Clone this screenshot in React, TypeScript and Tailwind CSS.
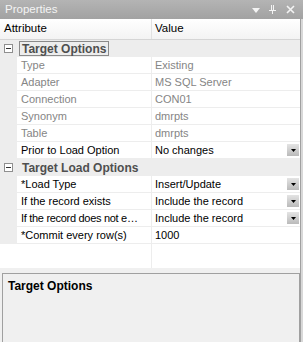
import React from "react";

type Row =
  | { kind: "cat"; label: string; focus?: boolean }
  | { kind: "prop"; label: string; value: string; ro?: boolean; dd?: boolean; tight?: boolean };

const rows: Row[] = [
  { kind: "cat", label: "Target Options", focus: true },
  { kind: "prop", label: "Type", value: "Existing", ro: true },
  { kind: "prop", label: "Adapter", value: "MS SQL Server", ro: true },
  { kind: "prop", label: "Connection", value: "CON01", ro: true },
  { kind: "prop", label: "Synonym", value: "dmrpts", ro: true },
  { kind: "prop", label: "Table", value: "dmrpts", ro: true },
  { kind: "prop", label: "Prior to Load Option", value: "No changes", dd: true },
  { kind: "cat", label: "Target Load Options" },
  { kind: "prop", label: "*Load Type", value: "Insert/Update", dd: true },
  { kind: "prop", label: "If the record exists", value: "Include the record", dd: true },
  { kind: "prop", label: "If the record does not e…", value: "Include the record", dd: true, tight: true },
  { kind: "prop", label: "*Commit every row(s)", value: "1000" },
];

function Minus() {
  return (
    <div className="w-[9px] h-[9px] border border-[#8f8f8f] bg-white flex items-center justify-center">
      <div className="w-[5px] h-px bg-[#333]" />
    </div>
  );
}

function DropBtn() {
  return (
    <div className="w-[12px] h-[12px] bg-gradient-to-b from-[#e4e4e4] to-[#bababa] flex items-center justify-center">
      <svg width="5" height="3" viewBox="0 0 5 3">
        <path d="M0 0 H5 L2.5 3 Z" fill="#000" />
      </svg>
    </div>
  );
}

export default function App() {
  return (
    <div
      className="w-[303px] h-[342px] overflow-hidden flex flex-col bg-[#f0f0f0] text-[11px] leading-none"
      style={{ fontFamily: '"Liberation Sans", Arial, sans-serif' }}
    >
      {/* Title bar */}
      <div className="h-[19px] shrink-0 bg-gradient-to-b from-[#b4b4b4] to-[#a2a2a2] flex items-center pl-[5px] pr-[8px]">
        <span className="text-[11.5px] text-[#f4f4f4] flex-1">Properties</span>
        <svg width="8" height="5" viewBox="0 0 8 5" className="mr-[9px] mt-[2px]">
          <path d="M0 0 H8 L4 5 Z" fill="#f4f4f4" />
        </svg>
        <svg width="7" height="9" viewBox="0 0 7 9" className="mr-[10px]">
          <path d="M2 0 H5 V5 H7 V6 H4 V9 H3 V6 H0 V5 H2 Z" fill="#f4f4f4" />
          <rect x="3" y="0" width="1" height="5" fill="#b0b0b0" />
        </svg>
        <svg width="9" height="9" viewBox="0 0 9 9">
          <path d="M1 1 L8 8 M8 1 L1 8" stroke="#f4f4f4" strokeWidth="1.6" />
        </svg>
      </div>

      <div className="flex-1 flex min-h-0">
        <div className="flex-1 flex flex-col min-w-0">
          {/* Grid */}
          <div className="flex flex-col bg-white">
            {/* Header */}
            <div className="h-[21px] flex bg-gradient-to-b from-white to-[#f3f3f3] border-b border-[#d5d5d5] text-black text-[11.5px]">
              <div className="w-[152px] border-r border-[#e2e2e2] flex items-center pl-[4px]">Attribute</div>
              <div className="flex-1 flex items-center pl-[3px]">Value</div>
            </div>
            {rows.map((r, i) =>
              r.kind === "cat" ? (
                <div key={i} className="h-[17px] flex items-center bg-[#ededed]">
                  <div className="w-[17px] flex justify-center">
                    <Minus />
                  </div>
                  <div
                    className={
                      "h-[15px] flex items-center px-[2px] font-bold text-[12px] text-[#4f4f4f] ml-[2px] " +
                      (r.focus ? "border border-[#8a8a8a]" : "border border-transparent")
                    }
                  >
                    {r.label}
                  </div>
                </div>
              ) : (
                <div key={i} className="h-[17px] flex">
                  <div className="w-[17px] bg-[#ededed]" />
                  <div
                    className={
                      "w-[135px] border-r border-b border-[#ededed] flex items-center pl-[4px] whitespace-nowrap " +
                      (r.ro ? "text-[#858585] " : "text-black ") +
                      (r.tight ? "tracking-[-0.3px]" : "")
                    }
                  >
                    {r.label}
                  </div>
                  <div
                    className={
                      "flex-1 border-b border-[#ededed] flex items-center pl-[3px] pr-[1px] " +
                      (r.ro ? "text-[#858585]" : "text-black")
                    }
                  >
                    <span className="flex-1">{r.value}</span>
                    {r.dd && <DropBtn />}
                  </div>
                </div>
              )
            )}
            {/* Empty area */}
            <div className="h-[24px] flex">
              <div className="w-[152px] border-r border-[#ededed]" />
              <div className="flex-1" />
            </div>
          </div>

          {/* Splitter */}
          <div className="h-[5px] bg-[#f0f0f0]" />

          {/* Description */}
          <div className="flex-1 ml-[2px] border border-[#a0a0a0] border-b-0 bg-[#f0f0f0] pl-[5px] pt-[6px]">
            <div className="font-bold text-[12px] text-black">Target Options</div>
          </div>
        </div>
        {/* Right frame */}
        <div className="w-[3px] flex">
          <div className="w-px bg-[#a0a0a0]" />
          <div className="flex-1 bg-[#d8d8d8]" />
        </div>
      </div>
    </div>
  );
}
